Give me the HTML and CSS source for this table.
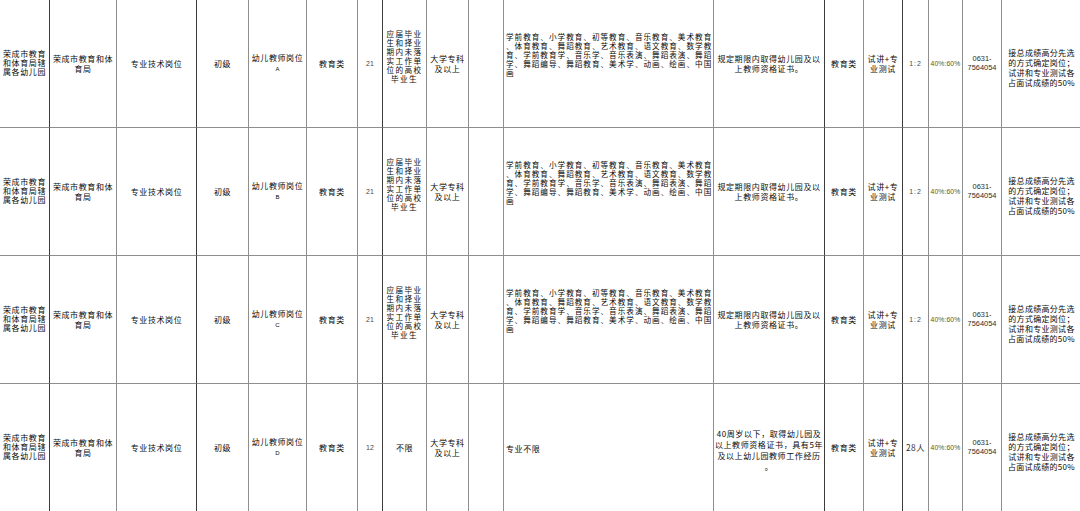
FILE: index.html
```html
<!DOCTYPE html>
<html lang="zh-CN">
<head>
<meta charset="utf-8">
<title>岗位表</title>
<link rel="stylesheet" href="styles.css">
</head>
<body>
<div class="sheet">
  <!-- row A -->
  <div class="c dk c1"><div>荣成市教育<br>和体育局辖<br>属各幼儿园</div></div>
  <div class="c two"><div>荣成市教育和体<br>育局</div></div>
  <div class="c dk"><div>专业技术岗位</div></div>
  <div class="c"><div>初级</div></div>
  <div class="c two"><div>幼儿教师岗位<br><span class="let">A</span></div></div>
  <div class="c"><div>教育类</div></div>
  <div class="c dk"><div class="num">21</div></div>
  <div class="c grad"><div>应届毕业<br>生和择业<br>期内未落<br>实工作单<br>位的高校<br>毕业生</div></div>
  <div class="c two"><div>大学专科<br>及以上</div></div>
  <div class="c"></div>
  <div class="c long"><div>学前教育、小学教育、初等教育、音乐教育、美术教育<br>、体育教育、舞蹈教育、艺术教育、语文教育、数学教<br>育、学前教育学、音乐学、音乐表演、舞蹈表演、舞蹈<br>学、舞蹈编导、舞蹈教育、美术学、动画、绘画、中国<br>画</div></div>
  <div class="c dk two"><div>规定期限内取得幼儿园及以<br>上教师资格证书。</div></div>
  <div class="c"><div>教育类</div></div>
  <div class="c dk two"><div>试讲+专<br>业测试</div></div>
  <div class="c"><div class="num ratio1">1:2</div></div>
  <div class="c"><div class="ratio">40%:60%</div></div>
  <div class="c"><div class="tel">0631-<br>7564054</div></div>
  <div class="c note"><div>接总成绩高分先选<br>的方式确定岗位；<br>试讲和专业测试各<br>占面试成绩的50%</div></div>

  <!-- row B -->
  <div class="c dk c1"><div>荣成市教育<br>和体育局辖<br>属各幼儿园</div></div>
  <div class="c two"><div>荣成市教育和体<br>育局</div></div>
  <div class="c dk"><div>专业技术岗位</div></div>
  <div class="c"><div>初级</div></div>
  <div class="c two"><div>幼儿教师岗位<br><span class="let">B</span></div></div>
  <div class="c"><div>教育类</div></div>
  <div class="c dk"><div class="num">21</div></div>
  <div class="c grad"><div>应届毕业<br>生和择业<br>期内未落<br>实工作单<br>位的高校<br>毕业生</div></div>
  <div class="c two"><div>大学专科<br>及以上</div></div>
  <div class="c"></div>
  <div class="c long"><div>学前教育、小学教育、初等教育、音乐教育、美术教育<br>、体育教育、舞蹈教育、艺术教育、语文教育、数学教<br>育、学前教育学、音乐学、音乐表演、舞蹈表演、舞蹈<br>学、舞蹈编导、舞蹈教育、美术学、动画、绘画、中国<br>画</div></div>
  <div class="c dk two"><div>规定期限内取得幼儿园及以<br>上教师资格证书。</div></div>
  <div class="c"><div>教育类</div></div>
  <div class="c dk two"><div>试讲+专<br>业测试</div></div>
  <div class="c"><div class="num ratio1">1:2</div></div>
  <div class="c"><div class="ratio">40%:60%</div></div>
  <div class="c"><div class="tel">0631-<br>7564054</div></div>
  <div class="c note"><div>接总成绩高分先选<br>的方式确定岗位；<br>试讲和专业测试各<br>占面试成绩的50%</div></div>

  <!-- row C -->
  <div class="c dk c1"><div>荣成市教育<br>和体育局辖<br>属各幼儿园</div></div>
  <div class="c two"><div>荣成市教育和体<br>育局</div></div>
  <div class="c dk"><div>专业技术岗位</div></div>
  <div class="c"><div>初级</div></div>
  <div class="c two"><div>幼儿教师岗位<br><span class="let">C</span></div></div>
  <div class="c"><div>教育类</div></div>
  <div class="c dk"><div class="num">21</div></div>
  <div class="c grad"><div>应届毕业<br>生和择业<br>期内未落<br>实工作单<br>位的高校<br>毕业生</div></div>
  <div class="c two"><div>大学专科<br>及以上</div></div>
  <div class="c"></div>
  <div class="c long"><div>学前教育、小学教育、初等教育、音乐教育、美术教育<br>、体育教育、舞蹈教育、艺术教育、语文教育、数学教<br>育、学前教育学、音乐学、音乐表演、舞蹈表演、舞蹈<br>学、舞蹈编导、舞蹈教育、美术学、动画、绘画、中国<br>画</div></div>
  <div class="c dk two"><div>规定期限内取得幼儿园及以<br>上教师资格证书。</div></div>
  <div class="c"><div>教育类</div></div>
  <div class="c dk two"><div>试讲+专<br>业测试</div></div>
  <div class="c"><div class="num ratio1">1:2</div></div>
  <div class="c"><div class="ratio">40%:60%</div></div>
  <div class="c"><div class="tel">0631-<br>7564054</div></div>
  <div class="c note"><div>接总成绩高分先选<br>的方式确定岗位；<br>试讲和专业测试各<br>占面试成绩的50%</div></div>

  <!-- row D -->
  <div class="c dk c1"><div>荣成市教育<br>和体育局辖<br>属各幼儿园</div></div>
  <div class="c two"><div>荣成市教育和体<br>育局</div></div>
  <div class="c dk"><div>专业技术岗位</div></div>
  <div class="c"><div>初级</div></div>
  <div class="c two"><div>幼儿教师岗位<br><span class="let">D</span></div></div>
  <div class="c"><div>教育类</div></div>
  <div class="c dk"><div class="num">12</div></div>
  <div class="c"><div>不限</div></div>
  <div class="c two"><div>大学专科<br>及以上</div></div>
  <div class="c"></div>
  <div class="c long plain"><div>专业不限</div></div>
  <div class="c dk age"><div>40周岁以下，取得幼儿园及<br>以上教师资格证书，具有5年<br>及以上幼儿园教师工作经历<br>。</div></div>
  <div class="c"><div>教育类</div></div>
  <div class="c dk two"><div>试讲+专<br>业测试</div></div>
  <div class="c"><div class="cnt">28人</div></div>
  <div class="c"><div class="ratio">40%:60%</div></div>
  <div class="c"><div class="tel">0631-<br>7564054</div></div>
  <div class="c note"><div>接总成绩高分先选<br>的方式确定岗位；<br>试讲和专业测试各<br>占面试成绩的50%</div></div>
</div>
</body>
</html>
```

FILE: styles.css
```css
html, body {
  margin: 0;
  padding: 0;
  background: #ffffff;
}

body {
  width: 1080px;
  height: 511px;
  overflow: hidden;
  font-family: "Noto Sans CJK SC", "Noto Sans", sans-serif;
  font-size: 8px;
  letter-spacing: 0.6px;
  color: #0a0a0a;
}

.sheet {
  display: grid;
  grid-template-columns: 50px 67px 80px 52px 58px 51px 25px 44px 42px 35px 210px 111px 39px 39px 26px 34px 39px 80px;
  grid-auto-rows: 128px;
  width: 1082px;
}

.c {
  box-sizing: border-box;
  border-right: 1px solid #8e8e8e;
  border-bottom: 1px solid #8e8e8e;
  display: flex;
  align-items: center;
  justify-content: center;
  text-align: center;
  line-height: 9.4px;
  overflow: hidden;
  white-space: nowrap;
}

.dk {
  border-right-color: #3c3c3c;
}

.c1 {
  line-height: 9.3px;
  padding-bottom: 2px;
}

.two {
  line-height: 9.4px;
}

.let {
  font-family: "Liberation Sans", sans-serif;
  font-size: 6px;
  letter-spacing: 0;
}

.num {
  font-family: "Liberation Sans", sans-serif;
  font-size: 7px;
  letter-spacing: 0;
  color: #4a4a4a;
}

.ratio1 {
  letter-spacing: 1px;
}

.grad {
  font-size: 7.6px;
  letter-spacing: 1.4px;
  line-height: 9px;
  padding-bottom: 16px;
}

.long {
  justify-content: flex-start;
  text-align: left;
  padding: 0 0 18px 2px;
  font-size: 7.6px;
  line-height: 9px;
  letter-spacing: 1px;
}

.long.plain {
  padding-bottom: 0;
  padding-top: 2px;
  font-size: 8px;
  letter-spacing: 0.6px;
}

.age {
  line-height: 11px;
  padding-top: 5px;
}

.cnt {
  color: #333333;
  font-size: 8.4px;
  letter-spacing: 0.5px;
}

.ratio {
  font-family: "Liberation Sans", sans-serif;
  font-size: 6.8px;
  color: #4d5e26;
  letter-spacing: 0.1px;
}

.tel {
  font-family: "Liberation Sans", sans-serif;
  font-size: 7.4px;
  letter-spacing: 0;
  line-height: 8.2px;
  color: #2a2a2a;
}

.note {
  letter-spacing: 0.3px;
  line-height: 10px;
  padding-top: 9px;
}
```
